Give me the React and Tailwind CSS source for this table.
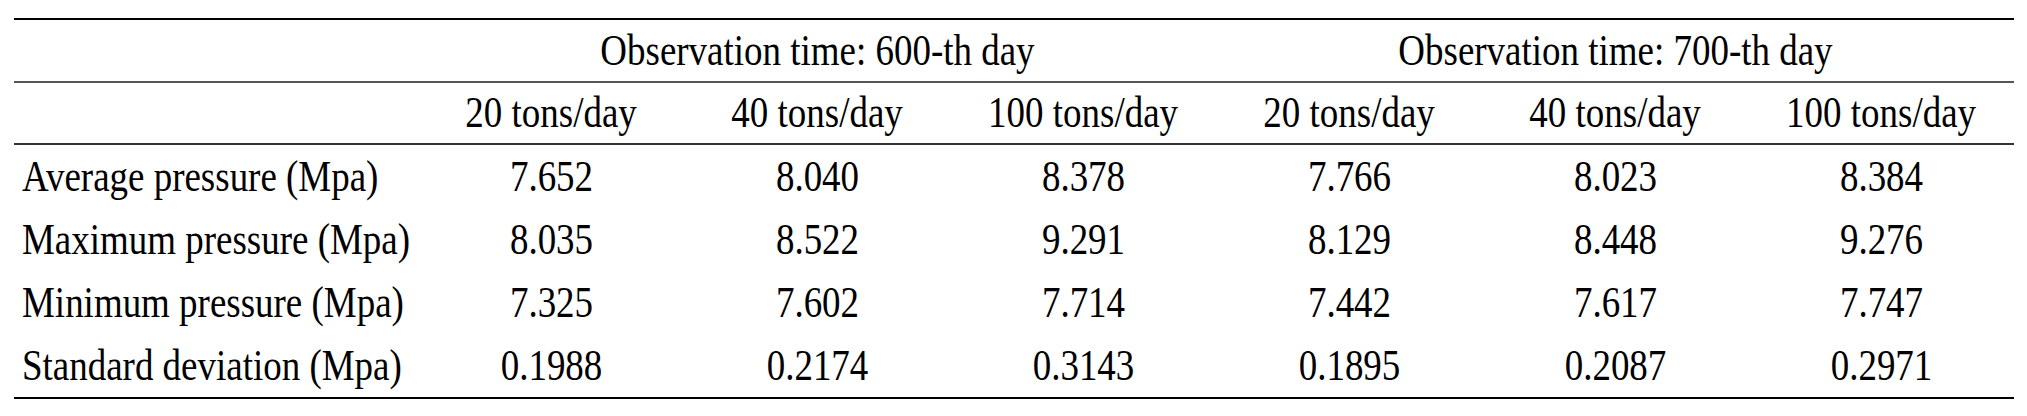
import React from "react";

const groups = ["Observation time: 600-th day", "Observation time: 700-th day"];
const subs = ["20 tons/day", "40 tons/day", "100 tons/day", "20 tons/day", "40 tons/day", "100 tons/day"];
const rows = [
  ["Average pressure (Mpa)", "7.652", "8.040", "8.378", "7.766", "8.023", "8.384"],
  ["Maximum pressure (Mpa)", "8.035", "8.522", "9.291", "8.129", "8.448", "9.276"],
  ["Minimum pressure (Mpa)", "7.325", "7.602", "7.714", "7.442", "7.617", "7.747"],
  ["Standard deviation (Mpa)", "0.1988", "0.2174", "0.3143", "0.1895", "0.2087", "0.2971"],
];

function T({ children, left }) {
  return (
    <span className={"inline-block whitespace-nowrap scale-x-[0.84] " + (left ? "origin-left" : "origin-center")}>
      {children}
    </span>
  );
}

export default function App() {
  return (
    <div className="w-[2027px] h-[416px] bg-white pl-[14px] pt-[18px] text-black font-['Liberation_Serif','Times_New_Roman',serif]">
      <div className="w-[2000px] text-[44px] leading-none">
        <div className="h-[2px] bg-black" />
        <div className="grid grid-cols-[404px_798px_798px] h-[61px] items-center">
          <div />
          {groups.map((g, i) => (
            <div key={i} className="text-center"><T>{g}</T></div>
          ))}
        </div>
        <div className="h-[2px] bg-[#555]" />
        <div className="grid grid-cols-[404px_repeat(6,266px)] h-[60px] items-center">
          <div />
          {subs.map((s, i) => (
            <div key={i} className="text-center"><T>{s}</T></div>
          ))}
        </div>
        <div className="h-[2px] bg-[#333]" />
        {rows.map((r, ri) => (
          <div key={ri} className="grid grid-cols-[404px_repeat(6,266px)] h-[63px] items-center">
            {r.map((c, ci) => (
              <div key={ci} className={ci === 0 ? "pl-[8px]" : "text-center"}>
                <T left={ci === 0}>{c}</T>
              </div>
            ))}
          </div>
        ))}
        <div className="h-[2px] bg-black" />
      </div>
    </div>
  );
}
